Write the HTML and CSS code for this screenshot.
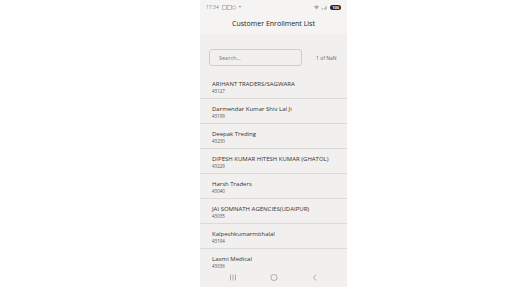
FILE: index.html
```html
<!DOCTYPE html>
<html lang="en">
  <head>
    <meta charset="UTF-8" />
    <meta name="viewport" content="width=device-width, initial-scale=1.0" />
    <title>Customer Enrollment List</title>
    <link rel="stylesheet" href="styles.css">
  </head>
  <body>
    <div class="phone">
      <!-- Status bar -->
      <div class="status-bar">
        <div class="status-left">
          <span>17:34</span>
          <svg width="14" height="5" viewBox="0 0 14 5">
            <rect x="0.5" y="0.5" width="4" height="4" fill="none" stroke="#aaa" stroke-width="0.7" />
            <rect x="5.5" y="0.5" width="4" height="4" fill="none" stroke="#aaa" stroke-width="0.7" />
            <circle cx="12" cy="2.5" r="1.8" fill="none" stroke="#aaa" stroke-width="0.7" />
          </svg>
          <span class="dot">•</span>
        </div>
        <div class="status-right">
          <svg width="13" height="5" viewBox="0 0 13 5">
            <path d="M0 1.5 Q2.5 -0.5 5 1.5 L2.5 4.5 Z" fill="#aaa" />
            <path d="M7 4.5 L9 4.5 L9 2.5 Z M9.5 4.5 L12.5 4.5 L12.5 0.5 Z" fill="#aaa" />
          </svg>
          <span class="battery">100</span>
        </div>
      </div>

      <div class="title-bar">Customer Enrollment List</div>

      <div class="search-row">
        <div class="search-box">Search...</div>
        <span class="page-count">1 of NaN</span>
      </div>

      <div class="list">
        <div class="item">
          <div class="item-name">ARIHANT TRADERS/SAGWARA</div>
          <div class="item-id">43127</div>
        </div>
        <div class="item">
          <div class="item-name">Darmendar Kumar Shiv Lal Ji</div>
          <div class="item-id">43199</div>
        </div>
        <div class="item">
          <div class="item-name">Deepak Treding</div>
          <div class="item-id">43230</div>
        </div>
        <div class="item">
          <div class="item-name">DIPESH KUMAR HITESH KUMAR (GHATOL)</div>
          <div class="item-id">43229</div>
        </div>
        <div class="item">
          <div class="item-name">Harsh Traders</div>
          <div class="item-id">43040</div>
        </div>
        <div class="item">
          <div class="item-name">JAI SOMNATH AGENCIES(UDAIPUR)</div>
          <div class="item-id">43035</div>
        </div>
        <div class="item">
          <div class="item-name">Kalpeshkumarmithalal</div>
          <div class="item-id">43194</div>
        </div>
        <div class="item">
          <div class="item-name">Laxmi Medical</div>
          <div class="item-id">43036</div>
        </div>
      </div>

      <!-- Navigation bar -->
      <div class="nav-bar">
        <svg width="8" height="7" viewBox="0 0 8 7">
          <path d="M1.5 0.5 V6.5 M4 0.5 V6.5 M6.5 0.5 V6.5" stroke="#999" stroke-width="0.8" />
        </svg>
        <svg width="8" height="7" viewBox="0 0 8 7">
          <rect x="1" y="0.6" width="6" height="5.8" rx="2.5" fill="none" stroke="#999" stroke-width="0.8" />
        </svg>
        <svg width="8" height="7" viewBox="0 0 8 7">
          <path d="M5 0.5 L2.5 3.5 L5 6.5" fill="none" stroke="#999" stroke-width="0.8" />
        </svg>
      </div>
    </div>
  </body>
</html>
```

FILE: styles.css
```css
body {
  margin: 0;
  background-color: #ffffff;
  font-family: "Open Sans", "Noto Sans", Arial, sans-serif;
  color: #333;
}
.phone {
  width: 147px;
  height: 287px;
  margin-left: 200px;
  background-color: #f1f0ee;
  display: flex;
  flex-direction: column;
  overflow: hidden;
}
/* Status bar */
.status-bar {
  height: 14px;
  padding: 0 6px;
  display: flex;
  justify-content: space-between;
  align-items: center;
  font-size: 5px;
  color: #888;
  background-color: #f5f4f2;
}
.status-left,
.status-right {
  display: flex;
  align-items: center;
  gap: 3px;
}
.dot {
  font-size: 6px;
  color: #555;
}
.battery {
  background-color: #222;
  color: #fff;
  font-size: 4px;
  font-weight: bold;
  padding: 0 2px;
  border-radius: 3px;
  line-height: 5px;
}
.title-bar {
  height: 18px;
  display: flex;
  justify-content: center;
  align-items: center;
  font-size: 7px;
  color: #222;
  background-color: #f5f4f2;
  padding-bottom: 2px;
}
/* Search */
.search-row {
  display: flex;
  align-items: center;
  padding: 15px 0 8px 9px;
}
.search-box {
  width: 82px;
  height: 15px;
  border: 1px solid #cfcecc;
  border-radius: 3px;
  padding-left: 9px;
  font-size: 5.5px;
  color: #777;
  display: flex;
  align-items: center;
}
.page-count {
  margin-left: 14px;
  font-size: 5px;
  color: #666;
  white-space: nowrap;
}
/* List */
.list {
  flex: 1;
  overflow: hidden;
}
.item {
  height: 25px;
  padding: 6px 0 0 12px;
  border-bottom: 1px solid #dcdbd9;
  box-sizing: border-box;
}
.item-name {
  font-size: 6px;
  line-height: 8px;
  color: #333;
  white-space: nowrap;
}
.item-id {
  font-size: 4.5px;
  line-height: 7px;
  color: #555;
}
/* Navigation bar */
.nav-bar {
  height: 16px;
  padding: 0 12px 2px 12px;
  display: flex;
  justify-content: space-around;
  align-items: center;
}
```
